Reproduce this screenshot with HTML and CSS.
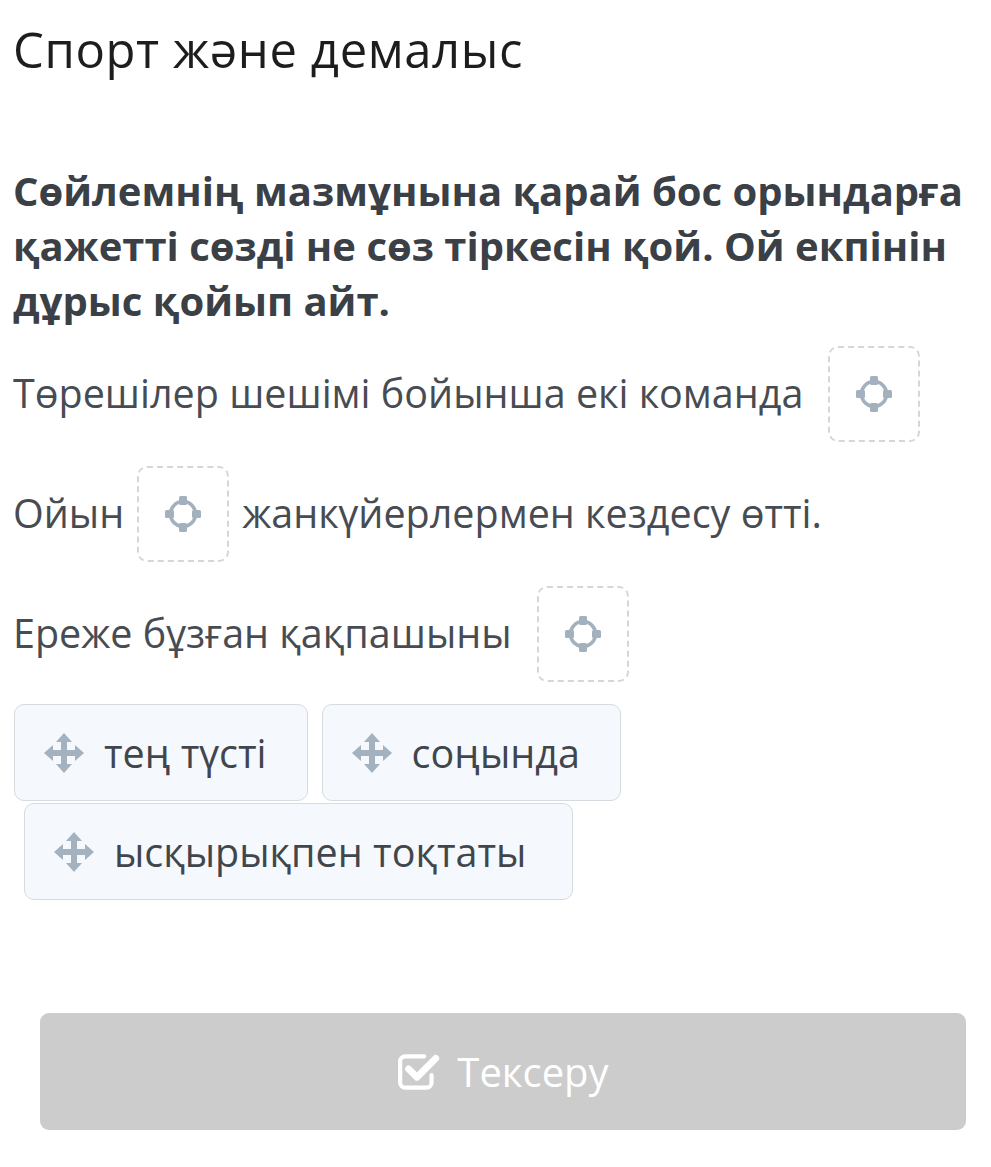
FILE: index.html
```html
<!DOCTYPE html>
<html lang="kk">
<head>
<meta charset="utf-8">
<title>Спорт және демалыс</title>
<link rel="stylesheet" href="styles.css">
</head>
<body>
<main class="page">
  <h1 class="title">Спорт және демалыс</h1>
  <h2 class="task">Сөйлемнің мазмұнына қарай бос орындарға қажетті сөзді не сөз тіркесін қой. Ой екпінін дұрыс қойып айт.</h2>

  <div class="sentence">
    <span class="text">Төрешілер шешімі бойынша екі команда</span>
    <span class="drop drop-wide">
      <svg class="target" viewBox="0 0 36 36"><circle cx="18" cy="18" r="12.5" fill="none" stroke="currentColor" stroke-width="3.6"/><rect x="14" y="0" width="8" height="9" rx="1.5" fill="currentColor"/><rect x="14" y="27" width="8" height="9" rx="1.5" fill="currentColor"/><rect x="0" y="14" width="9" height="8" rx="1.5" fill="currentColor"/><rect x="27" y="14" width="9" height="8" rx="1.5" fill="currentColor"/></svg>
    </span>
  </div>

  <div class="sentence">
    <span class="text">Ойын</span>
    <span class="drop">
      <svg class="target" viewBox="0 0 36 36"><circle cx="18" cy="18" r="12.5" fill="none" stroke="currentColor" stroke-width="3.6"/><rect x="14" y="0" width="8" height="9" rx="1.5" fill="currentColor"/><rect x="14" y="27" width="8" height="9" rx="1.5" fill="currentColor"/><rect x="0" y="14" width="9" height="8" rx="1.5" fill="currentColor"/><rect x="27" y="14" width="9" height="8" rx="1.5" fill="currentColor"/></svg>
    </span>
    <span class="text">жанкүйерлермен кездесу өтті.</span>
  </div>

  <div class="sentence">
    <span class="text">Ереже бұзған қақпашыны</span>
    <span class="drop drop-wide">
      <svg class="target" viewBox="0 0 36 36"><circle cx="18" cy="18" r="12.5" fill="none" stroke="currentColor" stroke-width="3.6"/><rect x="14" y="0" width="8" height="9" rx="1.5" fill="currentColor"/><rect x="14" y="27" width="8" height="9" rx="1.5" fill="currentColor"/><rect x="0" y="14" width="9" height="8" rx="1.5" fill="currentColor"/><rect x="27" y="14" width="9" height="8" rx="1.5" fill="currentColor"/></svg>
    </span>
  </div>

  <div class="chips">
    <div class="chip">
      <svg class="move" viewBox="0 0 40 40"><path fill="currentColor" d="M20 0 L28 9 H23 V17 H31 V12 L40 20 L31 28 V23 H23 V31 H28 L20 40 L12 31 H17 V23 H9 V28 L0 20 L9 12 V17 H17 V9 H12 Z"/></svg>
      <span>тең түсті</span>
    </div>
    <div class="chip">
      <svg class="move" viewBox="0 0 40 40"><path fill="currentColor" d="M20 0 L28 9 H23 V17 H31 V12 L40 20 L31 28 V23 H23 V31 H28 L20 40 L12 31 H17 V23 H9 V28 L0 20 L9 12 V17 H17 V9 H12 Z"/></svg>
      <span>соңында</span>
    </div>
    <div class="chip chip-indent">
      <svg class="move" viewBox="0 0 40 40"><path fill="currentColor" d="M20 0 L28 9 H23 V17 H31 V12 L40 20 L31 28 V23 H23 V31 H28 L20 40 L12 31 H17 V23 H9 V28 L0 20 L9 12 V17 H17 V9 H12 Z"/></svg>
      <span>ысқырықпен тоқтаты</span>
    </div>
  </div>

  <button class="check" type="button">
    <svg class="check-icon" viewBox="0 0 42 36"><path d="M26 3 H8 a5 5 0 0 0 -5 5 V28 a5 5 0 0 0 5 5 H28 a5 5 0 0 0 5 -5 V21" fill="none" stroke="currentColor" stroke-width="4" stroke-linecap="round"/><path d="M11 15 L19 23 L37 5" fill="none" stroke="currentColor" stroke-width="6.5" stroke-linecap="round" stroke-linejoin="round"/></svg>
    <span>Тексеру</span>
  </button>
</main>
</body>
</html>
```

FILE: styles.css
```css
* { box-sizing: border-box; }

body {
  margin: 0;
  background: #ffffff;
  font-family: "Open Sans", "Noto Sans", sans-serif;
}

.page {
  padding: 24px 13px 40px 13px;
}

.title {
  margin: 0;
  font-size: 49px;
  font-weight: 400;
  line-height: 50px;
  letter-spacing: 0.6px;
  color: #1d1d1d;
}

.task {
  margin: 89px 0 18px 0;
  font-size: 40px;
  font-weight: 700;
  line-height: 55px;
  color: #3b4047;
}

.sentence {
  display: flex;
  align-items: center;
  margin-bottom: 24px;
  font-size: 39.5px;
  line-height: 1.4;
  color: #474c53;
}

.drop {
  flex: none;
  width: 92px;
  height: 96px;
  margin: 0 13px;
  border: 2px dashed #d3d6da;
  border-radius: 10px;
  display: flex;
  align-items: center;
  justify-content: center;
  color: #a3b1bf;
}

.drop-wide { margin-left: 25px; }

.target { width: 36px; height: 36px; }

.chips {
  display: flex;
  flex-wrap: wrap;
  column-gap: 14px;
  row-gap: 2px;
  margin-top: -2px;
}

.chip {
  display: flex;
  align-items: center;
  height: 97px;
  padding: 0 40px 0 29px;
  background: #f5f9fd;
  border: 1.5px solid #d6dbe0;
  border-radius: 10px;
  font-size: 39.5px;
  color: #41464d;
}

.chip:first-child { margin-left: 1px; }

.chip-indent { margin-left: 11px; padding-right: 46px; }

.move {
  width: 40px;
  height: 40px;
  margin-right: 20px;
  color: #a4b2c0;
  flex: none;
}

.check {
  display: flex;
  align-items: center;
  justify-content: center;
  width: 926px;
  height: 117px;
  margin: 113px 0 0 27px;
  border: none;
  border-radius: 9px;
  background: #cccccc;
  color: #ffffff;
  font-family: "Open Sans", "Noto Sans", sans-serif;
  font-size: 40px;
}

.check-icon {
  width: 44px;
  height: 38px;
  margin-right: 16px;
}
```
